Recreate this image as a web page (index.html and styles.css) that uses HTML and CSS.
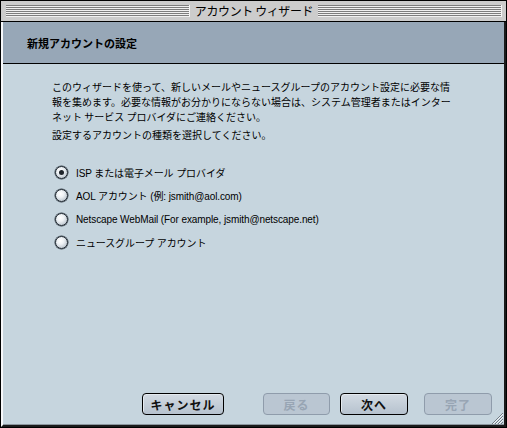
FILE: index.html
```html
<!DOCTYPE html>
<html lang="ja">
<head>
  <meta charset="UTF-8">
  <title>アカウント ウィザード</title>
  <link rel="stylesheet" href="styles.css">
</head>
<body>
  <div class="window">
    <div class="titlebar">
      <span class="stripes"></span>
      <span class="title">アカウント ウィザード</span>
      <span class="stripes"></span>
    </div>

    <div class="frame">
      <div class="header">新規アカウントの設定</div>

      <div class="content">
        <p class="intro">このウィザードを使って、新しいメールやニュースグループのアカウント設定に必要な情報を集めます。必要な情報がお分かりにならない場合は、システム管理者またはインターネット サービス プロバイダにご連絡ください。</p>
        <p class="intro">設定するアカウントの種類を選択してください。</p>

        <ul class="options">
          <li class="option"><span class="radio checked"></span>ISP または電子メール プロバイダ</li>
          <li class="option"><span class="radio"></span>AOL アカウント (例: jsmith@aol.com)</li>
          <li class="option"><span class="radio"></span>Netscape WebMail (For example, jsmith@netscape.net)</li>
          <li class="option"><span class="radio"></span>ニュースグループ アカウント</li>
        </ul>
      </div>

      <div class="buttons">
        <button class="btn cancel">キャンセル</button>
        <button class="btn back" disabled>戻る</button>
        <button class="btn next">次へ</button>
        <button class="btn finish" disabled>完了</button>
      </div>

      <svg class="grip" width="14" height="14" viewBox="0 0 14 14">
        <path d="M13 2 L2 13 M13 5 L5 13 M13 8 L8 13 M13 11 L11 13" stroke="#6f7a85" stroke-width="1"/>
        <path d="M13 3 L3 13 M13 6 L6 13 M13 9 L9 13" stroke="#f2f5f7" stroke-width="1"/>
      </svg>
    </div>
  </div>
</body>
</html>
```

FILE: styles.css
```css
body {
  margin: 0;
  font-family: "Noto Sans CJK JP", sans-serif;
  color: #000;
  background-color: #fff;
}

.window {
  width: 505px;
  height: 426px;
  border: 1px solid #000;
  display: flex;
  flex-direction: column;
  background-color: #c6d5de;
}

.titlebar {
  height: 20px;
  flex: none;
  display: flex;
  align-items: center;
  padding: 0 4px 0 5px;
  background-color: #cccccc;
  border-bottom: 1px solid #000;
}

.stripes {
  flex: 1;
  height: 12px;
  background: repeating-linear-gradient(to bottom, #7d7d7d 0 1px, #f0f0f0 1px 2px);
  border-right: 1px solid #f4f4f4;
}

.title {
  padding: 0 5px;
  font-size: 12px;
  letter-spacing: -0.4px;
  line-height: 18px;
}

.frame {
  position: relative;
  flex: 1;
  display: flex;
  flex-direction: column;
  border-left: 2px solid #f6f8fa;
  border-right: 2px solid #1a1a1a;
  border-bottom: 2px solid #1a1a1a;
}

.header {
  height: 41px;
  flex: none;
  padding-left: 24px;
  background-color: #97a7b7;
  border-bottom: 1px solid #000;
  font-size: 11px;
  font-weight: bold;
  line-height: 43px;
}

.content {
  flex: 1;
  padding: 15px 0 0 49px;
}

.intro {
  width: 403px;
  margin: 0 0 3px;
  font-size: 10px;
  line-height: 15px;
  line-break: strict;
}

.options {
  list-style: none;
  margin: 19px 0 0 3px;
  padding: 0;
}

.option {
  display: flex;
  align-items: center;
  height: 23.3px;
  font-family: "Liberation Sans", "Noto Sans CJK JP", sans-serif;
  font-size: 10px;
  letter-spacing: -0.1px;
}

.radio {
  width: 11px;
  height: 11px;
  margin-right: 8px;
  border: 1px solid #1d252d;
  border-radius: 50%;
  background: radial-gradient(circle at 40% 35%, #ffffff 0, #eef2f5 35%, #a4b0bc 100%);
  box-shadow: 0 0 0 0.5px #3a444e;
  display: flex;
  align-items: center;
  justify-content: center;
}

.radio.checked::after {
  content: "";
  width: 5px;
  height: 5px;
  border-radius: 50%;
  background-color: #1e242a;
}

.buttons {
  height: 31px;
  flex: none;
  display: flex;
  align-items: flex-start;
  border-bottom: 1px solid #8c969e;
}

.btn {
  height: 22px;
  padding: 0;
  border: 1px solid #000;
  border-radius: 4px;
  background: linear-gradient(to bottom, #d3dbe3, #b6c2ce);
  box-shadow: inset 1px 1px 0 #e4eaef;
  font-family: "Noto Sans CJK JP", sans-serif;
  font-size: 12px;
  font-weight: bold;
  color: #111;
  letter-spacing: 1px;
}

.btn:disabled {
  border-color: #8f9cab;
  background: #bac6d2;
  box-shadow: none;
  color: #98a5b4;
}

.cancel {
  width: 82px;
  margin-left: 139px;
}

.back {
  width: 67px;
  margin-left: 39px;
}

.next {
  width: 68px;
  margin-left: 10px;
}

.finish {
  width: 68px;
  margin-left: 16px;
}

.grip {
  position: absolute;
  right: 0;
  bottom: 0;
}
```
